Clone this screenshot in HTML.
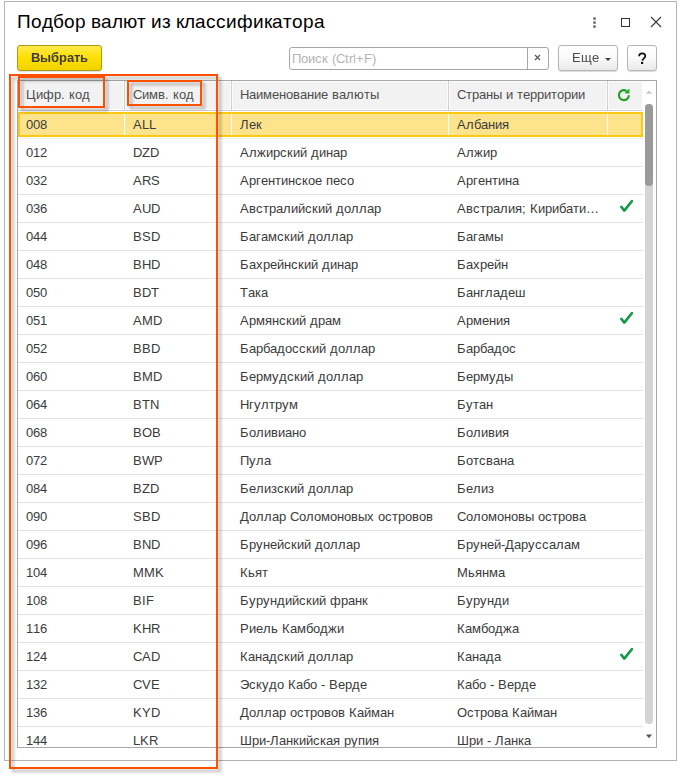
<!DOCTYPE html>
<html><head><meta charset="utf-8">
<style>
html,body{margin:0;padding:0;background:#fff;width:693px;height:784px;overflow:hidden;position:relative;font-family:"Liberation Sans",sans-serif;}
i{font-style:normal;display:inline-block;white-space:pre;}
.w0{width:0px}.w1{width:1px}.w2{width:2px}.w3{width:3px}.w4{width:4px}.w5{width:5px}.w6{width:6px}.w7{width:7px}.w8{width:8px}.w9{width:9px}.w10{width:10px}.w11{width:11px}.w12{width:12px}.w13{width:13px}.w14{width:14px}.w15{width:15px}.w16{width:16px}.w17{width:17px}.w18{width:18px}.w19{width:19px}.w20{width:20px}.w21{width:21px}.w22{width:22px}.w23{width:23px}.w24{width:24px}
.abs{position:absolute;}
#win{position:absolute;left:4px;top:1px;width:671px;height:758px;border:1px solid #b4b4b4;background:#fff;}
#title{position:absolute;left:17px;top:11px;font-size:19px;;line-height:22px;color:#000;white-space:nowrap;}
#bsel{position:absolute;left:17px;top:45px;width:83px;height:24px;border:1px solid #a99b10;border-radius:3px;
  background:linear-gradient(#ffea4d,#ffdf00 50%,#f0d200);box-shadow:0 1px 1px rgba(0,0,0,.12);
  font-weight:bold;font-size:13px;color:#3c3c3c;text-align:center;line-height:24px;}
#search{position:absolute;left:289px;top:47px;width:258px;height:21px;border:1px solid #a6a6a6;border-radius:3px;background:#fff;}
#search .ph{position:absolute;left:2px;top:0;line-height:21px;font-size:13px;color:#b4b4b4;}
#search .sep{position:absolute;left:237px;top:0;width:1px;height:21px;background:#a6a6a6;}
.btn{position:absolute;top:45px;height:24px;border:1px solid #b6b6b6;border-radius:3px;background:linear-gradient(#fff,#fafafa 50%,#e9e9e9);
  box-shadow:0 1px 1px rgba(0,0,0,.15);font-size:13px;color:#404040;line-height:24px;}
#more{left:558px;width:58px;color:#4a4a4a;}
#help{left:627px;width:28px;}
#tbl{position:absolute;left:17px;top:80px;width:638px;height:666px;border:1px solid #a8a8a8;background:#fff;overflow:hidden;}
#hdr{position:absolute;left:0;top:0;width:624px;height:29px;background:#f2f2f2;border-bottom:1px solid #cdcdcd;}
.hc{position:absolute;top:-1px;line-height:29px;font-size:13px;color:#4d4d4d;white-space:nowrap;}
.hcell{position:absolute;top:0;height:27px;border:1px solid #fbfbfb;}
.vs{position:absolute;top:0;width:1px;height:29px;background:#d0d0d0;}
.row{position:absolute;left:0;width:625px;height:28px;border-bottom:1px solid #e4e4e4;font-size:13px;color:#3b3b3b;}
.row span{position:absolute;top:1px;line-height:28px;white-space:nowrap;}
.c1{left:8px;} .c2{left:115px;} .c3{left:222px;} .c4{left:439px;}
.row.sel{border-bottom-color:#eeeeee;}
.row.sel:before{content:"";position:absolute;left:0;top:2px;width:621px;height:21px;border:2px solid #fbc813;background:#fee38d;}
.row.sel .vsw{position:absolute;top:4px;width:1px;height:21px;background:#fff;}
.chk{position:absolute;left:600px;top:5px;}
#sb{position:absolute;left:627px;top:0;width:11px;height:666px;}
</style></head><body>
<div id="win"></div>
<div id="title"><i class="w14">П</i><i class="w11">о</i><i class="w11">д</i><i class="w11">б</i><i class="w11">о</i><i class="w11">р</i><i class="w5">&nbsp;</i><i class="w10">в</i><i class="w11">а</i><i class="w11">л</i><i class="w14">ю</i><i class="w9">т</i><i class="w5">&nbsp;</i><i class="w11">и</i><i class="w9">з</i><i class="w5">&nbsp;</i><i class="w8">к</i><i class="w11">л</i><i class="w11">а</i><i class="w10">с</i><i class="w10">с</i><i class="w11">и</i><i class="w16">ф</i><i class="w11">и</i><i class="w8">к</i><i class="w11">а</i><i class="w9">т</i><i class="w11">о</i><i class="w11">р</i><i class="w11">а</i></div>
<svg class="abs" style="left:588px;top:14px" width="14" height="16"><circle cx="6.5" cy="4.5" r="1.5" fill="#777"/><circle cx="6.5" cy="8.5" r="1.5" fill="#777"/><circle cx="6.5" cy="12.5" r="1.5" fill="#777"/></svg>
<div class="abs" style="left:621px;top:18px;width:7px;height:7px;border:1.5px solid #333;"></div>
<svg class="abs" style="left:649px;top:15px" width="14" height="14"><path d="M2 2 L12 12 M12 2 L2 12" stroke="#383838" stroke-width="1.1"/></svg>
<div id="bsel"><span style="display:inline-block;will-change:transform"><i class="w9">В</i><i class="w11">ы</i><i class="w8">б</i><i class="w8">р</i><i class="w7">а</i><i class="w6">т</i><i class="w8">ь</i></span></div>
<div id="search"><span class="ph"><i class="w9">П</i><i class="w7">о</i><i class="w7">и</i><i class="w7">с</i><i class="w6">к</i><i class="w4">&nbsp;</i><i class="w4">(</i><i class="w9">C</i><i class="w4">t</i><i class="w4">r</i><i class="w3">l</i><i class="w8">+</i><i class="w8">F</i><i class="w4">)</i></span><div class="sep"></div>
<svg class="abs" style="left:243px;top:5px" width="10" height="10"><path d="M2 2 L7 7 M7 2 L2 7" stroke="#555" stroke-width="1.1"/></svg></div>
<div id="more" class="btn"><span class="abs" style="left:13px;top:0;will-change:transform"><i class="w9">Е</i><i class="w11">щ</i><i class="w7">е</i></span><svg class="abs" style="left:46px;top:12px" width="8" height="4"><path d="M0 0 L6 0 L3 3Z" fill="#444"/></svg></div>
<div id="help" class="btn"><svg class="abs" style="left:4px;top:2px" width="20" height="20"><path d="M7.1 8.2 C7.1 6.3 8.6 5.3 10.2 5.3 C12 5.3 13.3 6.4 13.3 8 C13.3 10.2 10.5 10.7 10.2 12.7" fill="none" stroke="#111" stroke-width="1.7"/><rect x="9" y="13.9" width="2.2" height="2.1" fill="#111"/></svg></div>
<div id="tbl">
<div id="hdr">
<div class="hcell" style="left:0;width:104px"></div>
<div class="hcell" style="left:107px;width:104px"></div>
<div class="hcell" style="left:214px;width:214px"></div>
<div class="hcell" style="left:431px;width:156px"></div>
<div class="hcell" style="left:590px;width:33px;border-right:0"></div>
<span class="hc" style="left:8px"><i class="w10">Ц</i><i class="w7">и</i><i class="w11">ф</i><i class="w7">р</i><i class="w4">.</i><i class="w4">&nbsp;</i><i class="w6">к</i><i class="w7">о</i><i class="w8">д</i></span>
<span class="hc" style="left:115px"><i class="w9">С</i><i class="w7">и</i><i class="w9">м</i><i class="w7">в</i><i class="w4">.</i><i class="w4">&nbsp;</i><i class="w6">к</i><i class="w7">о</i><i class="w8">д</i></span>
<span class="hc" style="left:222px"><i class="w9">Н</i><i class="w7">а</i><i class="w7">и</i><i class="w9">м</i><i class="w7">е</i><i class="w7">н</i><i class="w7">о</i><i class="w7">в</i><i class="w7">а</i><i class="w7">н</i><i class="w7">и</i><i class="w7">е</i><i class="w4">&nbsp;</i><i class="w7">в</i><i class="w7">а</i><i class="w8">л</i><i class="w10">ю</i><i class="w6">т</i><i class="w9">ы</i></span>
<span class="hc" style="left:439px"><i class="w9">С</i><i class="w6">т</i><i class="w7">р</i><i class="w7">а</i><i class="w7">н</i><i class="w9">ы</i><i class="w4">&nbsp;</i><i class="w7">и</i><i class="w4">&nbsp;</i><i class="w6">т</i><i class="w7">е</i><i class="w7">р</i><i class="w7">р</i><i class="w7">и</i><i class="w6">т</i><i class="w7">о</i><i class="w7">р</i><i class="w7">и</i><i class="w7">и</i></span>
<div class="vs" style="left:106px"></div><div class="vs" style="left:213px"></div><div class="vs" style="left:430px"></div><div class="vs" style="left:589px"></div>
<svg class="abs" style="left:599px;top:7px" width="16" height="16" viewBox="0 0 16 16"><path d="M11.9 7.3 A5 5 0 1 1 9.6 2.9" fill="none" stroke="#22a022" stroke-width="2.2"/><path d="M7.4 5.3 L12.4 0.6 L12.4 5.4 Z" fill="#22a022"/></svg>
</div>
<div class="row sel" style="top:29px"><span class="c1"><i class="w7">0</i><i class="w7">0</i><i class="w7">8</i></span><span class="c2"><i class="w9">A</i><i class="w7">L</i><i class="w7">L</i></span><span class="c3"><i class="w9">Л</i><i class="w7">е</i><i class="w6">к</i></span><span class="c4"><i class="w9">А</i><i class="w8">л</i><i class="w7">б</i><i class="w7">а</i><i class="w7">н</i><i class="w7">и</i><i class="w7">я</i></span></div>
<div class="row" style="top:57px"><span class="c1"><i class="w7">0</i><i class="w7">1</i><i class="w7">2</i></span><span class="c2"><i class="w9">D</i><i class="w8">Z</i><i class="w9">D</i></span><span class="c3"><i class="w9">А</i><i class="w8">л</i><i class="w9">ж</i><i class="w7">и</i><i class="w7">р</i><i class="w7">с</i><i class="w6">к</i><i class="w7">и</i><i class="w7">й</i><i class="w4">&nbsp;</i><i class="w8">д</i><i class="w7">и</i><i class="w7">н</i><i class="w7">а</i><i class="w7">р</i></span><span class="c4"><i class="w9">А</i><i class="w8">л</i><i class="w9">ж</i><i class="w7">и</i><i class="w7">р</i></span></div>
<div class="row" style="top:85px"><span class="c1"><i class="w7">0</i><i class="w7">3</i><i class="w7">2</i></span><span class="c2"><i class="w9">A</i><i class="w9">R</i><i class="w9">S</i></span><span class="c3"><i class="w9">А</i><i class="w7">р</i><i class="w5">г</i><i class="w7">е</i><i class="w7">н</i><i class="w6">т</i><i class="w7">и</i><i class="w7">н</i><i class="w7">с</i><i class="w6">к</i><i class="w7">о</i><i class="w7">е</i><i class="w4">&nbsp;</i><i class="w7">п</i><i class="w7">е</i><i class="w7">с</i><i class="w7">о</i></span><span class="c4"><i class="w9">А</i><i class="w7">р</i><i class="w5">г</i><i class="w7">е</i><i class="w7">н</i><i class="w6">т</i><i class="w7">и</i><i class="w7">н</i><i class="w7">а</i></span></div>
<div class="row" style="top:113px"><span class="c1"><i class="w7">0</i><i class="w7">3</i><i class="w7">6</i></span><span class="c2"><i class="w9">A</i><i class="w9">U</i><i class="w9">D</i></span><span class="c3"><i class="w9">А</i><i class="w7">в</i><i class="w7">с</i><i class="w6">т</i><i class="w7">р</i><i class="w7">а</i><i class="w8">л</i><i class="w7">и</i><i class="w7">й</i><i class="w7">с</i><i class="w6">к</i><i class="w7">и</i><i class="w7">й</i><i class="w4">&nbsp;</i><i class="w8">д</i><i class="w7">о</i><i class="w8">л</i><i class="w8">л</i><i class="w7">а</i><i class="w7">р</i></span><span class="c4"><i class="w9">А</i><i class="w7">в</i><i class="w7">с</i><i class="w6">т</i><i class="w7">р</i><i class="w7">а</i><i class="w8">л</i><i class="w7">и</i><i class="w7">я</i><i class="w4">;</i><i class="w4">&nbsp;</i><i class="w8">К</i><i class="w7">и</i><i class="w7">р</i><i class="w7">и</i><i class="w7">б</i><i class="w7">а</i><i class="w6">т</i><i class="w7">и</i><i class="w13">…</i></span><svg class="chk" width="16" height="14" viewBox="0 0 16 14"><path d="M3.3 7.9 L6.3 11.6 L13.9 2.1" fill="none" stroke="#17994a" stroke-width="2.6" stroke-linecap="round" stroke-linejoin="round"/></svg></div>
<div class="row" style="top:141px"><span class="c1"><i class="w7">0</i><i class="w7">4</i><i class="w7">4</i></span><span class="c2"><i class="w9">B</i><i class="w9">S</i><i class="w9">D</i></span><span class="c3"><i class="w9">Б</i><i class="w7">а</i><i class="w5">г</i><i class="w7">а</i><i class="w9">м</i><i class="w7">с</i><i class="w6">к</i><i class="w7">и</i><i class="w7">й</i><i class="w4">&nbsp;</i><i class="w8">д</i><i class="w7">о</i><i class="w8">л</i><i class="w8">л</i><i class="w7">а</i><i class="w7">р</i></span><span class="c4"><i class="w9">Б</i><i class="w7">а</i><i class="w5">г</i><i class="w7">а</i><i class="w9">м</i><i class="w9">ы</i></span></div>
<div class="row" style="top:169px"><span class="c1"><i class="w7">0</i><i class="w7">4</i><i class="w7">8</i></span><span class="c2"><i class="w9">B</i><i class="w9">H</i><i class="w9">D</i></span><span class="c3"><i class="w9">Б</i><i class="w7">а</i><i class="w7">х</i><i class="w7">р</i><i class="w7">е</i><i class="w7">й</i><i class="w7">н</i><i class="w7">с</i><i class="w6">к</i><i class="w7">и</i><i class="w7">й</i><i class="w4">&nbsp;</i><i class="w8">д</i><i class="w7">и</i><i class="w7">н</i><i class="w7">а</i><i class="w7">р</i></span><span class="c4"><i class="w9">Б</i><i class="w7">а</i><i class="w7">х</i><i class="w7">р</i><i class="w7">е</i><i class="w7">й</i><i class="w7">н</i></span></div>
<div class="row" style="top:197px"><span class="c1"><i class="w7">0</i><i class="w7">5</i><i class="w7">0</i></span><span class="c2"><i class="w9">B</i><i class="w9">D</i><i class="w8">T</i></span><span class="c3"><i class="w8">Т</i><i class="w7">а</i><i class="w6">к</i><i class="w7">а</i></span><span class="c4"><i class="w9">Б</i><i class="w7">а</i><i class="w7">н</i><i class="w5">г</i><i class="w8">л</i><i class="w7">а</i><i class="w8">д</i><i class="w7">е</i><i class="w10">ш</i></span></div>
<div class="row" style="top:225px"><span class="c1"><i class="w7">0</i><i class="w7">5</i><i class="w7">1</i></span><span class="c2"><i class="w9">A</i><i class="w11">M</i><i class="w9">D</i></span><span class="c3"><i class="w9">А</i><i class="w7">р</i><i class="w9">м</i><i class="w7">я</i><i class="w7">н</i><i class="w7">с</i><i class="w6">к</i><i class="w7">и</i><i class="w7">й</i><i class="w4">&nbsp;</i><i class="w8">д</i><i class="w7">р</i><i class="w7">а</i><i class="w9">м</i></span><span class="c4"><i class="w9">А</i><i class="w7">р</i><i class="w9">м</i><i class="w7">е</i><i class="w7">н</i><i class="w7">и</i><i class="w7">я</i></span><svg class="chk" width="16" height="14" viewBox="0 0 16 14"><path d="M3.3 7.9 L6.3 11.6 L13.9 2.1" fill="none" stroke="#17994a" stroke-width="2.6" stroke-linecap="round" stroke-linejoin="round"/></svg></div>
<div class="row" style="top:253px"><span class="c1"><i class="w7">0</i><i class="w7">5</i><i class="w7">2</i></span><span class="c2"><i class="w9">B</i><i class="w9">B</i><i class="w9">D</i></span><span class="c3"><i class="w9">Б</i><i class="w7">а</i><i class="w7">р</i><i class="w7">б</i><i class="w7">а</i><i class="w8">д</i><i class="w7">о</i><i class="w7">с</i><i class="w7">с</i><i class="w6">к</i><i class="w7">и</i><i class="w7">й</i><i class="w4">&nbsp;</i><i class="w8">д</i><i class="w7">о</i><i class="w8">л</i><i class="w8">л</i><i class="w7">а</i><i class="w7">р</i></span><span class="c4"><i class="w9">Б</i><i class="w7">а</i><i class="w7">р</i><i class="w7">б</i><i class="w7">а</i><i class="w8">д</i><i class="w7">о</i><i class="w7">с</i></span></div>
<div class="row" style="top:281px"><span class="c1"><i class="w7">0</i><i class="w7">6</i><i class="w7">0</i></span><span class="c2"><i class="w9">B</i><i class="w11">M</i><i class="w9">D</i></span><span class="c3"><i class="w9">Б</i><i class="w7">е</i><i class="w7">р</i><i class="w9">м</i><i class="w7">у</i><i class="w8">д</i><i class="w7">с</i><i class="w6">к</i><i class="w7">и</i><i class="w7">й</i><i class="w4">&nbsp;</i><i class="w8">д</i><i class="w7">о</i><i class="w8">л</i><i class="w8">л</i><i class="w7">а</i><i class="w7">р</i></span><span class="c4"><i class="w9">Б</i><i class="w7">е</i><i class="w7">р</i><i class="w9">м</i><i class="w7">у</i><i class="w8">д</i><i class="w9">ы</i></span></div>
<div class="row" style="top:309px"><span class="c1"><i class="w7">0</i><i class="w7">6</i><i class="w7">4</i></span><span class="c2"><i class="w9">B</i><i class="w8">T</i><i class="w9">N</i></span><span class="c3"><i class="w9">Н</i><i class="w5">г</i><i class="w7">у</i><i class="w8">л</i><i class="w6">т</i><i class="w7">р</i><i class="w7">у</i><i class="w9">м</i></span><span class="c4"><i class="w9">Б</i><i class="w7">у</i><i class="w6">т</i><i class="w7">а</i><i class="w7">н</i></span></div>
<div class="row" style="top:337px"><span class="c1"><i class="w7">0</i><i class="w7">6</i><i class="w7">8</i></span><span class="c2"><i class="w9">B</i><i class="w10">O</i><i class="w9">B</i></span><span class="c3"><i class="w9">Б</i><i class="w7">о</i><i class="w8">л</i><i class="w7">и</i><i class="w7">в</i><i class="w7">и</i><i class="w7">а</i><i class="w7">н</i><i class="w7">о</i></span><span class="c4"><i class="w9">Б</i><i class="w7">о</i><i class="w8">л</i><i class="w7">и</i><i class="w7">в</i><i class="w7">и</i><i class="w7">я</i></span></div>
<div class="row" style="top:365px"><span class="c1"><i class="w7">0</i><i class="w7">7</i><i class="w7">2</i></span><span class="c2"><i class="w9">B</i><i class="w12">W</i><i class="w9">P</i></span><span class="c3"><i class="w9">П</i><i class="w7">у</i><i class="w8">л</i><i class="w7">а</i></span><span class="c4"><i class="w9">Б</i><i class="w7">о</i><i class="w6">т</i><i class="w7">с</i><i class="w7">в</i><i class="w7">а</i><i class="w7">н</i><i class="w7">а</i></span></div>
<div class="row" style="top:393px"><span class="c1"><i class="w7">0</i><i class="w7">8</i><i class="w7">4</i></span><span class="c2"><i class="w9">B</i><i class="w8">Z</i><i class="w9">D</i></span><span class="c3"><i class="w9">Б</i><i class="w7">е</i><i class="w8">л</i><i class="w7">и</i><i class="w6">з</i><i class="w7">с</i><i class="w6">к</i><i class="w7">и</i><i class="w7">й</i><i class="w4">&nbsp;</i><i class="w8">д</i><i class="w7">о</i><i class="w8">л</i><i class="w8">л</i><i class="w7">а</i><i class="w7">р</i></span><span class="c4"><i class="w9">Б</i><i class="w7">е</i><i class="w8">л</i><i class="w7">и</i><i class="w6">з</i></span></div>
<div class="row" style="top:421px"><span class="c1"><i class="w7">0</i><i class="w7">9</i><i class="w7">0</i></span><span class="c2"><i class="w9">S</i><i class="w9">B</i><i class="w9">D</i></span><span class="c3"><i class="w9">Д</i><i class="w7">о</i><i class="w8">л</i><i class="w8">л</i><i class="w7">а</i><i class="w7">р</i><i class="w4">&nbsp;</i><i class="w9">С</i><i class="w7">о</i><i class="w8">л</i><i class="w7">о</i><i class="w9">м</i><i class="w7">о</i><i class="w7">н</i><i class="w7">о</i><i class="w7">в</i><i class="w9">ы</i><i class="w7">х</i><i class="w4">&nbsp;</i><i class="w7">о</i><i class="w7">с</i><i class="w6">т</i><i class="w7">р</i><i class="w7">о</i><i class="w7">в</i><i class="w7">о</i><i class="w7">в</i></span><span class="c4"><i class="w9">С</i><i class="w7">о</i><i class="w8">л</i><i class="w7">о</i><i class="w9">м</i><i class="w7">о</i><i class="w7">н</i><i class="w7">о</i><i class="w7">в</i><i class="w9">ы</i><i class="w4">&nbsp;</i><i class="w7">о</i><i class="w7">с</i><i class="w6">т</i><i class="w7">р</i><i class="w7">о</i><i class="w7">в</i><i class="w7">а</i></span></div>
<div class="row" style="top:449px"><span class="c1"><i class="w7">0</i><i class="w7">9</i><i class="w7">6</i></span><span class="c2"><i class="w9">B</i><i class="w9">N</i><i class="w9">D</i></span><span class="c3"><i class="w9">Б</i><i class="w7">р</i><i class="w7">у</i><i class="w7">н</i><i class="w7">е</i><i class="w7">й</i><i class="w7">с</i><i class="w6">к</i><i class="w7">и</i><i class="w7">й</i><i class="w4">&nbsp;</i><i class="w8">д</i><i class="w7">о</i><i class="w8">л</i><i class="w8">л</i><i class="w7">а</i><i class="w7">р</i></span><span class="c4"><i class="w9">Б</i><i class="w7">р</i><i class="w7">у</i><i class="w7">н</i><i class="w7">е</i><i class="w7">й</i><i class="w4">-</i><i class="w9">Д</i><i class="w7">а</i><i class="w7">р</i><i class="w7">у</i><i class="w7">с</i><i class="w7">с</i><i class="w7">а</i><i class="w8">л</i><i class="w7">а</i><i class="w9">м</i></span></div>
<div class="row" style="top:477px"><span class="c1"><i class="w7">1</i><i class="w7">0</i><i class="w7">4</i></span><span class="c2"><i class="w11">M</i><i class="w11">M</i><i class="w9">K</i></span><span class="c3"><i class="w8">К</i><i class="w7">ь</i><i class="w7">я</i><i class="w6">т</i></span><span class="c4"><i class="w11">М</i><i class="w7">ь</i><i class="w7">я</i><i class="w7">н</i><i class="w9">м</i><i class="w7">а</i></span></div>
<div class="row" style="top:505px"><span class="c1"><i class="w7">1</i><i class="w7">0</i><i class="w7">8</i></span><span class="c2"><i class="w9">B</i><i class="w4">I</i><i class="w8">F</i></span><span class="c3"><i class="w9">Б</i><i class="w7">у</i><i class="w7">р</i><i class="w7">у</i><i class="w7">н</i><i class="w8">д</i><i class="w7">и</i><i class="w7">й</i><i class="w7">с</i><i class="w6">к</i><i class="w7">и</i><i class="w7">й</i><i class="w4">&nbsp;</i><i class="w11">ф</i><i class="w7">р</i><i class="w7">а</i><i class="w7">н</i><i class="w6">к</i></span><span class="c4"><i class="w9">Б</i><i class="w7">у</i><i class="w7">р</i><i class="w7">у</i><i class="w7">н</i><i class="w8">д</i><i class="w7">и</i></span></div>
<div class="row" style="top:533px"><span class="c1"><i class="w7">1</i><i class="w7">1</i><i class="w7">6</i></span><span class="c2"><i class="w9">K</i><i class="w9">H</i><i class="w9">R</i></span><span class="c3"><i class="w9">Р</i><i class="w7">и</i><i class="w7">е</i><i class="w8">л</i><i class="w7">ь</i><i class="w4">&nbsp;</i><i class="w8">К</i><i class="w7">а</i><i class="w9">м</i><i class="w7">б</i><i class="w7">о</i><i class="w8">д</i><i class="w9">ж</i><i class="w7">и</i></span><span class="c4"><i class="w8">К</i><i class="w7">а</i><i class="w9">м</i><i class="w7">б</i><i class="w7">о</i><i class="w8">д</i><i class="w9">ж</i><i class="w7">а</i></span></div>
<div class="row" style="top:561px"><span class="c1"><i class="w7">1</i><i class="w7">2</i><i class="w7">4</i></span><span class="c2"><i class="w9">C</i><i class="w9">A</i><i class="w9">D</i></span><span class="c3"><i class="w8">К</i><i class="w7">а</i><i class="w7">н</i><i class="w7">а</i><i class="w8">д</i><i class="w7">с</i><i class="w6">к</i><i class="w7">и</i><i class="w7">й</i><i class="w4">&nbsp;</i><i class="w8">д</i><i class="w7">о</i><i class="w8">л</i><i class="w8">л</i><i class="w7">а</i><i class="w7">р</i></span><span class="c4"><i class="w8">К</i><i class="w7">а</i><i class="w7">н</i><i class="w7">а</i><i class="w8">д</i><i class="w7">а</i></span><svg class="chk" width="16" height="14" viewBox="0 0 16 14"><path d="M3.3 7.9 L6.3 11.6 L13.9 2.1" fill="none" stroke="#17994a" stroke-width="2.6" stroke-linecap="round" stroke-linejoin="round"/></svg></div>
<div class="row" style="top:589px"><span class="c1"><i class="w7">1</i><i class="w7">3</i><i class="w7">2</i></span><span class="c2"><i class="w9">C</i><i class="w9">V</i><i class="w9">E</i></span><span class="c3"><i class="w9">Э</i><i class="w7">с</i><i class="w6">к</i><i class="w7">у</i><i class="w8">д</i><i class="w7">о</i><i class="w4">&nbsp;</i><i class="w8">К</i><i class="w7">а</i><i class="w7">б</i><i class="w7">о</i><i class="w4">&nbsp;</i><i class="w4">-</i><i class="w4">&nbsp;</i><i class="w9">В</i><i class="w7">е</i><i class="w7">р</i><i class="w8">д</i><i class="w7">е</i></span><span class="c4"><i class="w8">К</i><i class="w7">а</i><i class="w7">б</i><i class="w7">о</i><i class="w4">&nbsp;</i><i class="w4">-</i><i class="w4">&nbsp;</i><i class="w9">В</i><i class="w7">е</i><i class="w7">р</i><i class="w8">д</i><i class="w7">е</i></span></div>
<div class="row" style="top:617px"><span class="c1"><i class="w7">1</i><i class="w7">3</i><i class="w7">6</i></span><span class="c2"><i class="w9">K</i><i class="w9">Y</i><i class="w9">D</i></span><span class="c3"><i class="w9">Д</i><i class="w7">о</i><i class="w8">л</i><i class="w8">л</i><i class="w7">а</i><i class="w7">р</i><i class="w4">&nbsp;</i><i class="w7">о</i><i class="w7">с</i><i class="w6">т</i><i class="w7">р</i><i class="w7">о</i><i class="w7">в</i><i class="w7">о</i><i class="w7">в</i><i class="w4">&nbsp;</i><i class="w8">К</i><i class="w7">а</i><i class="w7">й</i><i class="w9">м</i><i class="w7">а</i><i class="w7">н</i></span><span class="c4"><i class="w10">О</i><i class="w7">с</i><i class="w6">т</i><i class="w7">р</i><i class="w7">о</i><i class="w7">в</i><i class="w7">а</i><i class="w4">&nbsp;</i><i class="w8">К</i><i class="w7">а</i><i class="w7">й</i><i class="w9">м</i><i class="w7">а</i><i class="w7">н</i></span></div>
<div class="row" style="top:645px"><span class="c1"><i class="w7">1</i><i class="w7">4</i><i class="w7">4</i></span><span class="c2"><i class="w7">L</i><i class="w9">K</i><i class="w9">R</i></span><span class="c3"><i class="w12">Ш</i><i class="w7">р</i><i class="w7">и</i><i class="w4">-</i><i class="w9">Л</i><i class="w7">а</i><i class="w7">н</i><i class="w6">к</i><i class="w7">и</i><i class="w7">й</i><i class="w7">с</i><i class="w6">к</i><i class="w7">а</i><i class="w7">я</i><i class="w4">&nbsp;</i><i class="w7">р</i><i class="w7">у</i><i class="w7">п</i><i class="w7">и</i><i class="w7">я</i></span><span class="c4"><i class="w12">Ш</i><i class="w7">р</i><i class="w7">и</i><i class="w4">&nbsp;</i><i class="w4">-</i><i class="w4">&nbsp;</i><i class="w9">Л</i><i class="w7">а</i><i class="w7">н</i><i class="w6">к</i><i class="w7">а</i></span></div>
<div class="abs" style="left:106px;top:33px;width:1px;height:21px;background:#fff"></div>
<div class="abs" style="left:213px;top:33px;width:1px;height:21px;background:#fff"></div>
<div class="abs" style="left:430px;top:33px;width:1px;height:21px;background:#fff"></div>
<div class="abs" style="left:589px;top:33px;width:1px;height:21px;background:#fff"></div>
<div id="sb">
<svg class="abs" style="left:0px;top:9px" width="8" height="6"><path d="M1 3.7 L4 0.2 L7 3.7Z" fill="#c6c6c6"/></svg>
<div class="abs" style="left:0px;top:23px;width:8px;height:620px;border-radius:4px;background:#d4d4d4;"></div>
<div class="abs" style="left:0px;top:23px;width:8px;height:82px;border-radius:4px;background:#9a9a9a;"></div>
<svg class="abs" style="left:0px;top:653px" width="8" height="6"><path d="M1 0.6 L7 0.6 L4 4.2Z" fill="#555"/></svg>
</div>
</div>
<!-- annotations -->
<div class="abs" style="left:9px;top:74px;width:205px;height:691px;border:2px solid #ff5000;filter:drop-shadow(3px 3px 1.5px rgba(0,0,0,.3));"></div>
<div class="abs" style="left:18px;top:76px;width:83px;height:28px;border:2px solid #ff5000;filter:drop-shadow(3px 3px 1.5px rgba(0,0,0,.3));"></div>
<div class="abs" style="left:127px;top:80px;width:71px;height:22px;border:2px solid #ff5000;filter:drop-shadow(3px 3px 1.5px rgba(0,0,0,.3));"></div>
</body></html>
